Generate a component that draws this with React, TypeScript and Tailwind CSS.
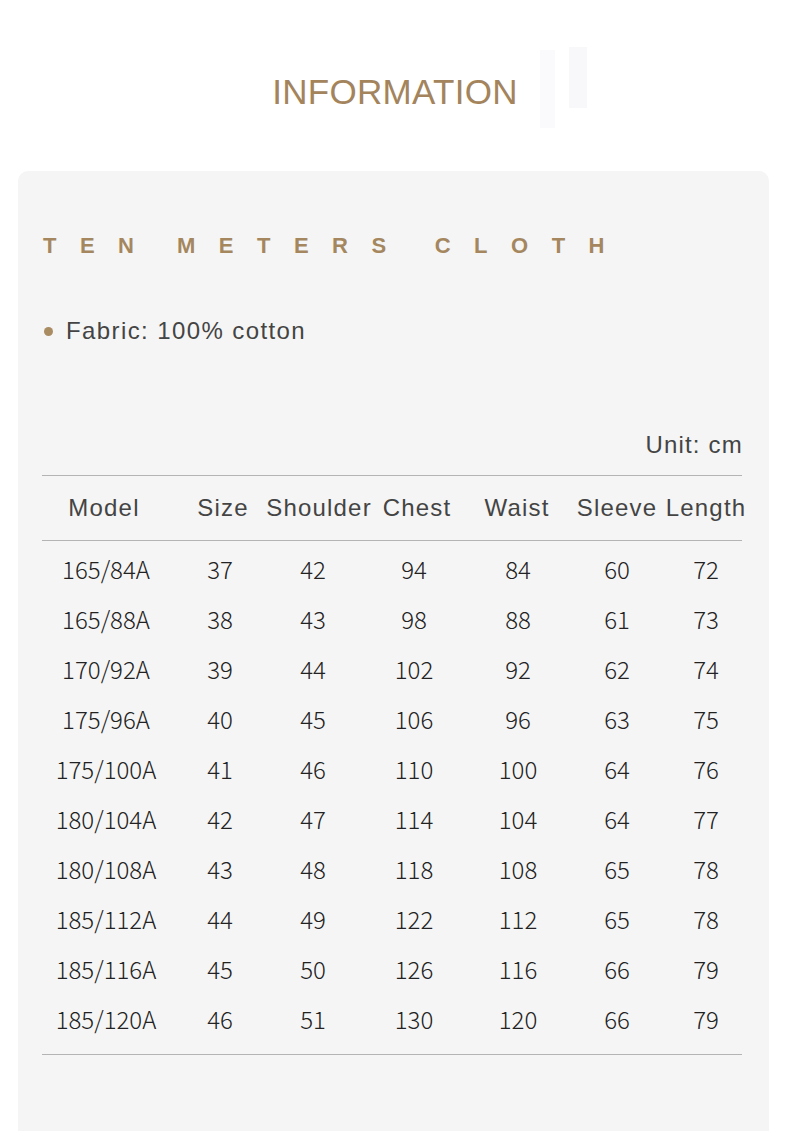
const rows = [
  ["165/84A", "37", "42", "94", "84", "60", "72"],
  ["165/88A", "38", "43", "98", "88", "61", "73"],
  ["170/92A", "39", "44", "102", "92", "62", "74"],
  ["175/96A", "40", "45", "106", "96", "63", "75"],
  ["175/100A", "41", "46", "110", "100", "64", "76"],
  ["180/104A", "42", "47", "114", "104", "64", "77"],
  ["180/108A", "43", "48", "118", "108", "65", "78"],
  ["185/112A", "44", "49", "122", "112", "65", "78"],
  ["185/116A", "45", "50", "126", "116", "66", "79"],
  ["185/120A", "46", "51", "130", "120", "66", "79"],
];

const heads = ["Model", "Size", "Shoulder", "Chest", "Waist", "Sleeve", "Length"];

// header labels sit a little off the data columns in the original
const headCols = "grid grid-cols-[124px_114px_78px_118px_82px_118px_60px]";
const dataCols = "grid grid-cols-[128px_100px_86px_116px_92px_106px_72px]";

const App = () => {
  return (
    <div className="min-h-[1131px] bg-white font-['Liberation_Sans',Arial,sans-serif]">
      <div className="h-[171px] flex items-start justify-center pt-[70px]">
        <div className="relative">
          <h1 className="text-[35px] leading-[44px] text-[#a3845c] tracking-[0.3px]">
            INFORMATION
          </h1>
          <div className="absolute left-[268px] top-[-20px] w-[15px] h-[78px] bg-[#fafafd]"></div>
          <div className="absolute left-[297px] top-[-23px] w-[18px] h-[61px] bg-[#f8f8fb]"></div>
        </div>
      </div>

      <div className="ml-[18px] w-[751px] rounded-t-[10px] bg-[#f5f5f5] pt-[61px] pb-[80px] pl-[24px] pr-[26px]">
        <h2 className="flex text-[22px] leading-[28px] font-bold tracking-[23.5px] text-[#a5875f] whitespace-nowrap pl-[1px]">
          <span>TEN</span>
          <span className="ml-[19.5px]">METERS</span>
          <span className="ml-[25px]">CLOTH</span>
        </h2>

        <div className="mt-[56px] flex items-center gap-[13px] pl-[2px]">
          <span className="w-[9px] h-[9px] rounded-full bg-[#aa8c63]"></span>
          <span className="text-[24px] leading-[30px] tracking-[1.4px] text-[#444]">
            Fabric: 100% cotton
          </span>
        </div>

        <div className="mt-[84px] text-right text-[24px] leading-[30px] tracking-[1.2px] text-[#444]">
          Unit: cm
        </div>

        <div className="mt-[15px] w-[700px] border-t border-b border-[#b4b4b4]">
          <div className={`${headCols} h-[64px] items-center text-[24px] tracking-[1.2px] text-[#444]`}>
            {heads.map((h) => (
              <div key={h} className="flex justify-center whitespace-nowrap">
                {h}
              </div>
            ))}
          </div>
        </div>

        <div className="w-[700px] border-b border-[#b4b4b4] pt-[3px] pb-[10px] font-['Noto_Sans_CJK_SC',sans-serif] font-light text-[24px] text-[#222]">
          {rows.map((r, i) => (
            <div key={i} className={`${dataCols} h-[50px] items-center`}>
              {r.map((c, j) => (
                <div key={j} className="flex justify-center whitespace-nowrap">
                  {c}
                </div>
              ))}
            </div>
          ))}
        </div>
      </div>
    </div>
  );
};

export default App;
